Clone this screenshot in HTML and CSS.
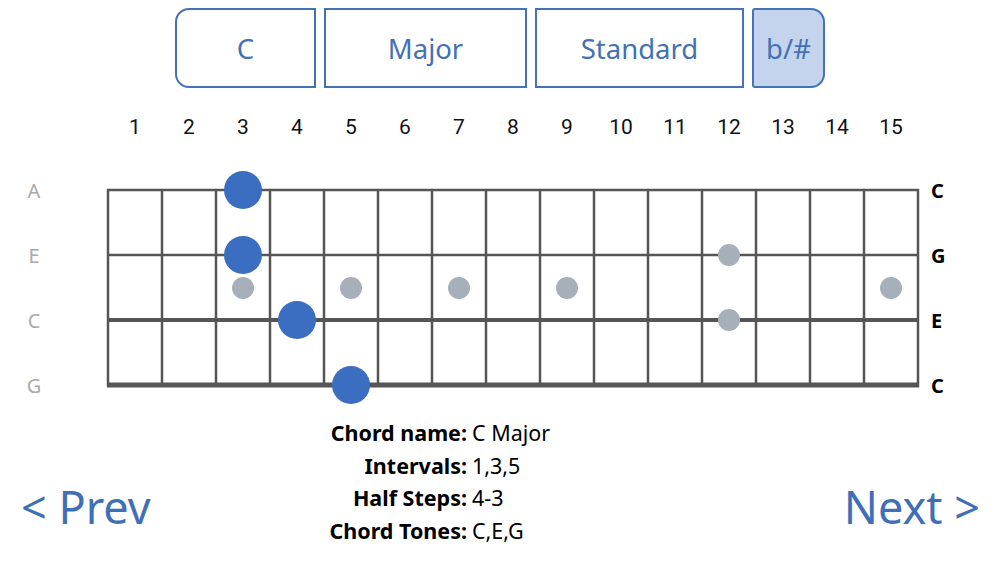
FILE: index.html
```html
<!DOCTYPE html>
<html>
<head>
<meta charset="utf-8">
<link rel="stylesheet" href="styles.css">
</head>
<body>
<div class="app">
  <div class="toolbar">
    <div class="btn btn-key">C</div>
    <div class="btn btn-quality">Major</div>
    <div class="btn btn-tuning">Standard</div>
    <div class="btn btn-acc">b/#</div>
  </div>
  <div class="fret-numbers">
    <span>1</span><span>2</span><span>3</span><span>4</span><span>5</span>
    <span>6</span><span>7</span><span>8</span><span>9</span><span>10</span>
    <span>11</span><span>12</span><span>13</span><span>14</span><span>15</span>
  </div>
  <div class="board-row">
    <div class="labels labels-left">
      <span>A</span><span>E</span><span>C</span><span>G</span>
    </div>
    <svg class="board" width="818" height="259" viewBox="0 0 818 259">
      <g stroke="#555" stroke-width="2.5">
        <line x1="4" y1="31" x2="4" y2="229"/>
        <line x1="58" y1="31" x2="58" y2="229"/>
        <line x1="112" y1="31" x2="112" y2="229"/>
        <line x1="166" y1="31" x2="166" y2="229"/>
        <line x1="220" y1="31" x2="220" y2="229"/>
        <line x1="274" y1="31" x2="274" y2="229"/>
        <line x1="328" y1="31" x2="328" y2="229"/>
        <line x1="382" y1="31" x2="382" y2="229"/>
        <line x1="436" y1="31" x2="436" y2="229"/>
        <line x1="490" y1="31" x2="490" y2="229"/>
        <line x1="544" y1="31" x2="544" y2="229"/>
        <line x1="598" y1="31" x2="598" y2="229"/>
        <line x1="652" y1="31" x2="652" y2="229"/>
        <line x1="706" y1="31" x2="706" y2="229"/>
        <line x1="760" y1="31" x2="760" y2="229"/>
        <line x1="814" y1="31" x2="814" y2="229"/>
      </g>
      <g stroke="#555">
        <line x1="3" y1="32" x2="815" y2="32" stroke-width="2.5"/>
        <line x1="3" y1="97" x2="815" y2="97" stroke-width="2.5"/>
        <line x1="3" y1="162" x2="815" y2="162" stroke-width="4"/>
        <line x1="3" y1="227" x2="815" y2="227" stroke-width="5"/>
      </g>
      <g fill="#a7b0ba">
        <circle cx="139" cy="130" r="11"/>
        <circle cx="247" cy="130" r="11"/>
        <circle cx="355" cy="130" r="11"/>
        <circle cx="463" cy="130" r="11"/>
        <circle cx="787" cy="130" r="11"/>
        <circle cx="625" cy="97" r="11"/>
        <circle cx="625" cy="162" r="11"/>
      </g>
      <g fill="#3b6ec0">
        <circle cx="139" cy="32" r="19"/>
        <circle cx="139" cy="97" r="19"/>
        <circle cx="193" cy="162" r="19"/>
        <circle cx="247" cy="227" r="19"/>
      </g>
    </svg>
    <div class="labels labels-right">
      <span>C</span><span>G</span><span>E</span><span>C</span>
    </div>
  </div>
  <div class="bottom">
    <div class="nav nav-prev">&lt; Prev</div>
    <div class="info">
      <span class="k">Chord name:</span><span class="v">C Major</span>
      <span class="k">Intervals:</span><span class="v">1,3,5</span>
      <span class="k">Half Steps:</span><span class="v">4-3</span>
      <span class="k">Chord Tones:</span><span class="v">C,E,G</span>
    </div>
    <div class="nav nav-next">Next &gt;</div>
  </div>
</div>
</body>
</html>
```

FILE: styles.css
```css
* { box-sizing: border-box; }
html, body {
  margin: 0;
  padding: 0;
  background: #ffffff;
}
body {
  width: 1000px;
  height: 563px;
  overflow: hidden;
  font-family: "Noto Sans", "Open Sans", sans-serif;
}
.app {
  display: flex;
  flex-direction: column;
}
.toolbar {
  display: flex;
  gap: 8px;
  padding-top: 8px;
  padding-left: 175px;
}
.btn {
  height: 80px;
  border: 2.5px solid #4472b6;
  color: #4271b6;
  font-size: 27.5px;
  display: flex;
  align-items: center;
  justify-content: center;
  background: #fff;
}
.btn-key { width: 141px; border-radius: 14px 0 0 14px; }
.btn-quality { width: 203px; }
.btn-tuning { width: 209px; }
.btn-acc {
  width: 73px;
  border-radius: 3px 14px 14px 3px;
  background: #c4d4ed;
}
.fret-numbers {
  margin-top: 24px;
  margin-left: 108px;
  width: 810px;
  display: grid;
  grid-template-columns: repeat(15, 1fr);
  line-height: 30px;
  font-family: Roboto, "Noto Sans", sans-serif;
  font-size: 21px;
  color: #111;
  text-align: center;
}
.board-row {
  margin-top: 16px;
  display: flex;
  height: 259px;
}
.labels {
  display: flex;
  flex-direction: column;
}
.labels span {
  height: 65px;
  line-height: 65px;
}
.labels-left {
  width: 104px;
  color: #a9a9a9;
  font-size: 20px;
}
.labels-left span {
  width: 68px;
  text-align: center;
}
.labels-right {
  padding-left: 9px;
  color: #000;
  font-weight: bold;
  font-size: 20px;
}
.board { display: block; }
.bottom {
  display: flex;
  align-items: flex-end;
}
.nav {
  color: #3f6fb7;
  font-size: 45px;
  line-height: 50px;
  padding-bottom: 15px;
}
.nav-prev {
  width: 300px;
  padding-left: 21px;
}
.nav-next {
  margin-left: auto;
  padding-right: 20px;
}
.info {
  display: grid;
  grid-template-columns: 167px auto;
  column-gap: 5px;
  font-size: 21.5px;
  line-height: 32.5px;
  color: #000;
}
.info .k {
  text-align: right;
  font-weight: bold;
}
```
